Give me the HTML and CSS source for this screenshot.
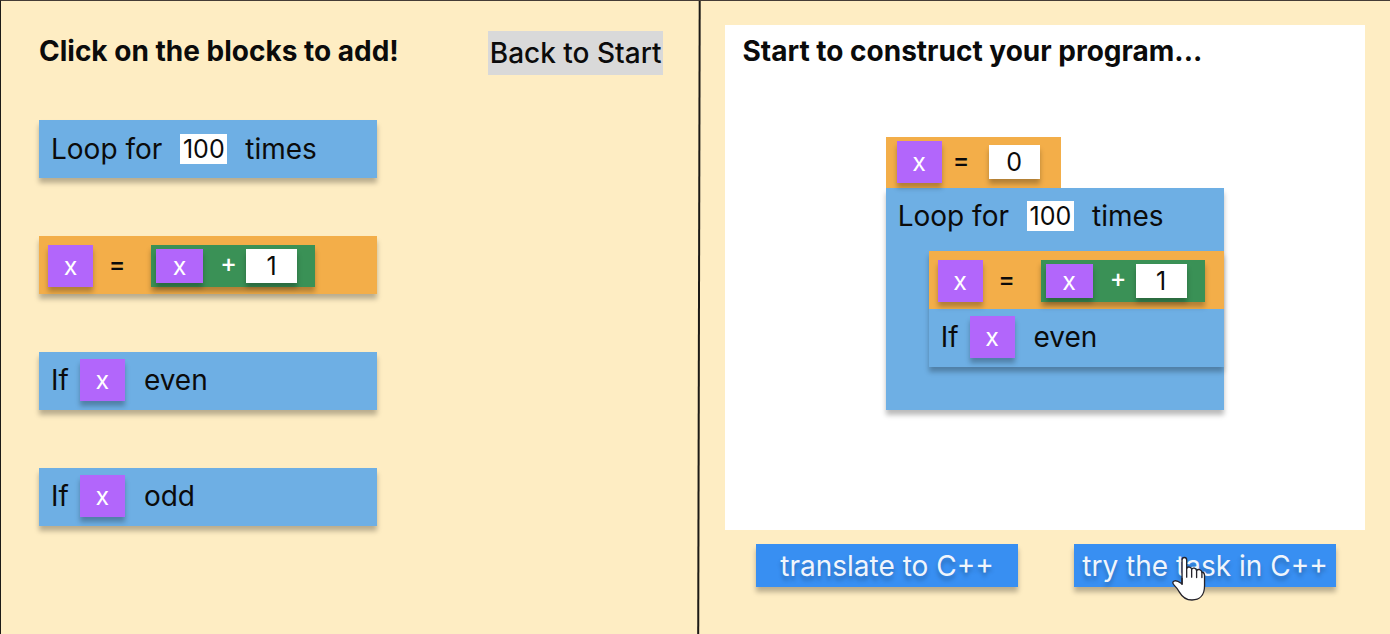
FILE: index.html
```html
<!DOCTYPE html>
<html lang="en">
<head>
<meta charset="utf-8">
<meta name="viewport" content="width=device-width, initial-scale=1">
<title>Block programming</title>
<link rel="stylesheet" href="styles.css">
</head>
<body>
<main class="app">
  <section class="palette">
    <header class="palette-head">
      <h2 class="title">Click on the blocks to add!</h2>
      <button class="back" type="button">Back to Start</button>
    </header>
    <div class="palette-list">
      <div class="block block-control block-loop">
        <span>Loop for</span>
        <input class="count" type="text" value="100" aria-label="Number of repeats">
        <span>times</span>
      </div>
      <div class="block block-assign">
        <span class="variable">x</span>
        <span class="operator">=</span>
        <span class="expression">
          <span class="variable variable-small">x</span>
          <span class="plus">+</span>
          <input class="value" type="text" value="1" aria-label="Amount to add">
        </span>
      </div>
      <div class="block block-control block-if">
        <span>If</span>
        <span class="variable">x</span>
        <span class="condition">even</span>
      </div>
      <div class="block block-control block-if">
        <span>If</span>
        <span class="variable">x</span>
        <span class="condition">odd</span>
      </div>
    </div>
  </section>

  <svg class="divider" viewBox="0 0 4 100" preserveAspectRatio="none" aria-hidden="true">
    <path d="M2.7 0L1.2 100" stroke="#1c1a17" stroke-width="2" vector-effect="non-scaling-stroke"/>
  </svg>

  <section class="workspace">
    <div class="canvas">
      <h2 class="title">Start to construct your program...</h2>
      <div class="program">
        <div class="block-init">
          <span class="variable">x</span>
          <span class="operator">=</span>
          <input class="value" type="text" value="0" aria-label="Initial value of x">
        </div>
        <div class="loop">
          <div class="block-loop loop-head">
            <span>Loop for</span>
            <input class="count" type="text" value="100" aria-label="Number of repeats in program">
            <span>times</span>
          </div>
          <div class="loop-body">
            <div class="block-assign">
              <span class="variable">x</span>
              <span class="operator">=</span>
              <span class="expression">
                <span class="variable variable-small">x</span>
                <span class="plus">+</span>
                <input class="value" type="text" value="1" aria-label="Amount to add in program">
              </span>
            </div>
            <div class="block-control block-if">
              <span>If</span>
              <span class="variable">x</span>
              <span class="condition">even</span>
            </div>
          </div>
        </div>
      </div>
    </div>
    <div class="actions">
      <button class="action" type="button">translate to C++</button>
      <div class="action-slot">
        <button class="action" type="button">try the task in C++</button>
        <svg class="pointer" viewBox="0 0 105 136" aria-hidden="true">
          <path d="M33 70V12C33 2 47 2 47 12V38C49 31 61 32 62 40C65 34 76 36 77 44C81 38 92 41 93 49C99 49 101 53 101 60V90C101 118 86 133 63 133C44 133 33 123 25 109C19 98 15 94 9 88C3 82 4 77 11 75C20 73 26 80 33 85Z" fill="#fff" stroke="#25232b" stroke-width="4" stroke-linejoin="round"/>
          <path d="M33 85V68M47 36V64M62 39V64M77 43V65M93 48V65" fill="none" stroke="#25232b" stroke-width="4" stroke-linecap="round"/>
        </svg>
      </div>
    </div>
  </section>
</main>
</body>
</html>
```

FILE: styles.css
```css
* {
  box-sizing: border-box;
}

body {
  margin: 0;
  background: #feedc3;
  color: #0b0b0b;
  font-family: Inter, "Liberation Sans", sans-serif;
  font-size: 28px;
  line-height: 34px;
}

button,
input {
  margin: 0;
  padding: 0;
  border: 0;
  border-radius: 0;
  font: inherit;
  color: inherit;
}

.app {
  display: grid;
  grid-template-columns: 697fr 4px 689fr;
  min-height: 100vh;
  border-top: 1px solid #453c36;
  border-left: 1px solid #1c1a17;
}

.title {
  margin: 0;
  font-size: 28px;
  line-height: 34px;
  font-weight: 700;
}

.divider {
  width: 4px;
  height: 100%;
}

/* Palette */

.palette {
  padding: 30px 34px 30px 38px;
}

.palette-head {
  display: flex;
  justify-content: space-between;
  align-items: flex-start;
}

.palette-head .title {
  padding-top: 3px;
}

.back {
  padding: 5px 2px;
  background: #d9d9d9;
  font-weight: 500;
  cursor: pointer;
}

.palette-list {
  display: flex;
  flex-direction: column;
  gap: 58px;
  width: 338px;
  margin-top: 45px;
}

/* Blocks */

.block,
.loop,
.loop-body,
.variable,
.expression,
.value,
.action {
  box-shadow: 0 5px 5px rgba(0, 0, 0, 0.27);
}

.block-control,
.loop {
  background: #6eafe4;
}

.block-loop,
.block-assign,
.block-if {
  display: flex;
  align-items: center;
  height: 58px;
}

.block-loop {
  gap: 18px;
  padding-left: 12px;
}

.block-assign,
.block-init {
  background: #f3ae49;
}

.block-assign {
  padding: 2px 0 0 9px;
}

.block-assign .operator {
  width: 58px;
  padding-right: 10px;
}

.block-if {
  padding: 0 0 2px 12px;
}

.block-if .variable {
  margin-left: 11px;
}

.condition {
  margin-left: 19px;
}

.variable {
  display: flex;
  align-items: center;
  justify-content: center;
  width: 45px;
  height: 42px;
  background: #b266fb;
  color: #fff;
  font-size: 25px;
}

.variable-small {
  width: 47px;
  height: 34px;
}

.operator {
  padding-bottom: 4px;
  text-align: center;
  font-size: 25px;
  font-weight: 500;
}

.expression {
  display: flex;
  align-items: center;
  width: 164px;
  height: 42px;
  padding-left: 5px;
  background: #3a9156;
}

.plus {
  width: 43px;
  padding: 0 0 6px 8px;
  text-align: center;
  font-size: 25px;
  font-weight: 500;
  color: #fff;
}

.count,
.value {
  background: #fff;
  text-align: center;
  font-size: 25px;
}

.count {
  width: 47px;
  height: 30px;
}

.value {
  width: 51px;
  height: 34px;
}

/* Workspace */

.workspace {
  padding: 24px 25px 30px 24px;
}

.canvas {
  min-height: 505px;
  padding: 9px 0 30px 17px;
  background: #fff;
}

.program {
  width: 338px;
  margin: 69px 0 0 23%;
}

.block-init {
  display: flex;
  align-items: center;
  width: 175px;
  height: 51px;
  padding: 0 0 2px 11px;
}

.block-init .operator {
  width: 47px;
  padding-right: 8px;
}

.loop {
  padding-bottom: 43px;
}

.loop-head {
  height: 63px;
  padding-bottom: 7px;
}

.loop-body {
  margin-left: 43px;
}

.actions {
  display: flex;
  justify-content: flex-end;
  gap: 56px;
  margin: 14px 29px 0 0;
}

.action-slot {
  position: relative;
}

.action {
  width: 262px;
  height: 43px;
  background: #388ff2;
  color: #f0f5fc;
  text-shadow: 0 4px 4px rgba(0, 0, 0, 0.25);
  white-space: nowrap;
  cursor: pointer;
}

.pointer {
  position: absolute;
  top: 12px;
  left: 97px;
  width: 35px;
  height: 45px;
  pointer-events: none;
}
```
